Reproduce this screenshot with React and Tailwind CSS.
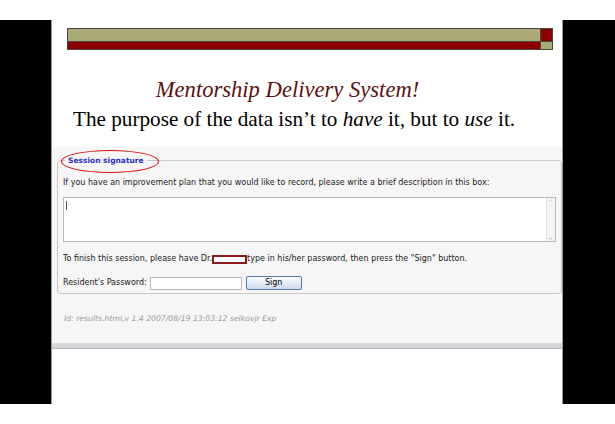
export default function App() {
  const ui = { fontFamily: '"DejaVu Sans", Verdana, sans-serif' }
  return (
    <div className="w-[615px] h-[424px] bg-white flex flex-col overflow-hidden">
      <div className="h-[20px]" />
      <div className="flex h-[384px]">
        <div className="w-[51px] bg-black" />
        <div className="w-[512px] bg-white border-x border-[#9a9a9a] relative flex flex-col">
          {/* header bars */}
          <div className="mt-[8px] ml-[15px] flex w-[486px] border border-[#4a4a3a]">
            <div className="flex-1 flex flex-col">
              <div className="h-[13px] bg-[#a9aa78] border-b border-[#4a4a3a]" />
              <div className="h-[7px] bg-[#8b0000]" />
            </div>
            <div className="w-[12px] flex flex-col border-l border-[#4a4a3a]">
              <div className="h-[13px] bg-[#8b0000] border-b border-[#4a4a3a]" />
              <div className="h-[7px] bg-[#a9aa78]" />
            </div>
          </div>

          <h1 className="mt-[26px] text-center italic text-[22.6px] leading-[28px] text-[#5c1111] pr-[39px]"
            style={{ fontFamily: '"Liberation Serif", "Times New Roman", serif' }}>
            Mentorship Delivery System!
          </h1>
          <p className="mt-[3px] ml-[21px] whitespace-nowrap text-[21.2px] leading-[24px] text-black"
            style={{ fontFamily: '"Liberation Serif", Georgia, serif' }}>
            The purpose of the data isn’t to <i>have</i> it, but to <i>use</i> it.
          </p>

          {/* captured web page */}
          <div className="mt-[16px] h-[196px] bg-[#f6f6f6] flex flex-col" style={ui}>
            <fieldset className="mt-[8px] ml-[5px] w-[505px] min-w-0 border border-[#c9c9c9] rounded-[4px] px-[5px] pb-[3px]">
              <legend className="ml-[2px] px-[3px] text-[7.5px] font-bold text-[#2a2ad0]">Session signature</legend>
              <p className="mt-[11px] text-[8px] text-[#222] whitespace-nowrap">
                If you have an improvement plan that you would like to record, please write a brief description in this box:
              </p>
              <div className="mt-[8px] h-[45px] w-full bg-white border border-[#b9b9b9] flex">
                <div className="flex-1 pl-[2px] pt-[3px]">
                  <div className="w-px h-[9px] bg-[#555]" />
                </div>
                <div className="w-[9px] border-l border-[#e2e2e2] bg-[#f4f4f4] flex flex-col justify-between items-center text-[6px] text-[#aaa] leading-[8px]">
                  <span>^</span>
                  <span className="rotate-180">^</span>
                </div>
              </div>
              <p className="mt-[11px] text-[8px] text-[#222] flex items-center whitespace-nowrap">
                <span>To finish this session, please have Dr.</span>
                <span className="inline-block w-[35px] h-[9px] border-2 border-[#8b1a1a] bg-white" />
                <span>type in his/her password, then press the "Sign" button.</span>
              </p>
              <div className="mt-[11px] flex items-center text-[8px] text-[#222]">
                <span>Resident's Password:</span>
                <div className="ml-[3px] w-[92px] h-[13px] bg-white border border-[#b9b9b9]" />
                <button className="ml-[4px] w-[56px] h-[14px] rounded-[2px] border border-[#5577aa] bg-gradient-to-b from-[#fbfcff] to-[#cfdcef] text-[8px] leading-[12px] text-black">
                  Sign
                </button>
              </div>
            </fieldset>
            <p className="mt-[19px] ml-[12px] italic text-[7.7px] text-[#9a9a9a]">
              Id: results.html,v 1.4 2007/08/19 13:03:12 selkovjr Exp
            </p>
          </div>
          <div className="h-[6px] bg-gradient-to-b from-[#dcdce0] to-[#d0d0d6] border-b border-[#b8b8be]" />

          <div className="absolute left-[9px] top-[130px] w-[98px] h-[23px] rounded-[50%] border-[1.5px] border-[#e01010]" />
        </div>
        <div className="flex-1 bg-black" />
      </div>
      <div className="h-[20px]" />
    </div>
  )
}
